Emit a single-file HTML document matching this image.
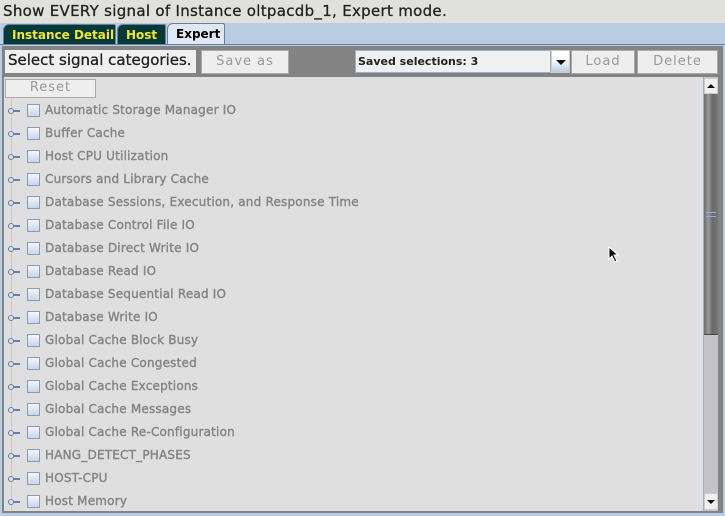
<!DOCTYPE html>
<html><head><style>
body{margin:0;width:725px;height:516px;background:#b8cce4;position:relative;overflow:hidden;font-family:"DejaVu Sans","Liberation Sans",sans-serif}
.a{position:absolute;box-sizing:border-box}
.title{left:0;top:0;width:725px;height:23px;background:#e1e1dc;font-size:15px;letter-spacing:0.3px;color:#222;padding:2px 0 0 3px;white-space:nowrap;-webkit-text-stroke:0.3px #222}
.tab{top:24px;height:20px;font-size:12px;font-weight:bold;padding:3px 0 0 8px;border:1px solid #6b7f99;border-bottom:none;border-radius:6px 2px 0 0}
.dk{background:#053a38;color:#f5e62a}
.btn{background:#eeeeee;border:1px solid #aaa;color:#999;font-size:13px;text-align:center;letter-spacing:1px}
.row{left:8px;height:23px;font-size:12px;letter-spacing:0.2px;color:#858585;white-space:nowrap;-webkit-text-stroke:0.4px #858585}
.row .k{position:absolute;left:0;top:10px;width:12px;height:2px;background:#6580b0}
.row .k:before{content:"";position:absolute;left:0;top:-2px;border:1px solid #6580b0;border-radius:50%;background:#dfdfdf;box-sizing:border-box;width:6px;height:6px}
.row .c{position:absolute;left:19px;top:4px;width:13px;height:13px;border:1px solid #8a9bb8;background:linear-gradient(#f4f6fb,#c9d6ea);box-sizing:border-box}
.row .t{position:absolute;left:37px;top:3px}
</style></head><body>
<div class="a title">Show EVERY signal of Instance oltpacdb_1, Expert mode.</div>
<div class="a tab dk" style="left:3px;width:113px">Instance Detail</div>
<div class="a tab dk" style="left:117px;width:49px">Host</div>
<div class="a tab" style="left:167px;width:58px;background:#dfe8f4;color:#000;top:23px;height:22px">Expert</div>
<div class="a" style="left:0;top:44px;width:725px;height:472px;background:#b8cce4;border-top:1px solid #6b7f99"></div>
<div class="a" style="left:2px;top:46px;width:721px;height:467px;background:#838383"></div>
<div class="a" style="left:5px;top:50px;width:191px;height:23px;background:#f0f0f0;font-size:15px;color:#222;padding:1px 0 0 3px;white-space:nowrap;-webkit-text-stroke:0.3px #222">Select signal categories.</div>
<div class="a btn" style="left:201px;top:50px;width:88px;height:24px;padding-top:3px">Save as</div>
<div class="a" style="left:355px;top:50px;width:196px;height:23px;background:#f0f0f0;border:1px solid #9fb0cc;font-size:11px;font-weight:bold;color:#222;padding:4px 0 0 2px">Saved selections: 3</div>
<div class="a" style="left:551px;top:50px;width:19px;height:23px;background:linear-gradient(#fff 40%,#b8cce4);border:1px solid #ccc"><div class="a" style="left:4px;top:9px;border-left:5px solid transparent;border-right:5px solid transparent;border-top:5px solid #111"></div></div>
<div class="a btn" style="left:571px;top:50px;width:64px;height:24px;padding-top:3px">Load</div>
<div class="a btn" style="left:637px;top:50px;width:81px;height:24px;padding-top:3px">Delete</div>
<div class="a" style="left:4px;top:77px;width:699px;height:434px;background:#dfdfdf"></div>
<div class="a btn" style="left:5px;top:79px;width:91px;height:19px;font-size:13px;padding-top:0">Reset</div>
<div class="a" style="left:11px;top:98px;width:1px;height:412px;background:#c8c8c8"></div>
<div class="a" style="left:703px;top:77px;width:15px;height:434px;background:#c4c4c8;border-left:1px solid #9fb0cc"></div>
<div class="a" style="left:704px;top:78px;width:14px;height:16px;background:#f0f0f0;border:1px solid #ccc"><div class="a" style="left:2px;top:5px;border-left:4px solid transparent;border-right:4px solid transparent;border-bottom:4px solid #111"></div></div>
<div class="a" style="left:704px;top:94px;width:14px;height:241px;background:linear-gradient(90deg,#6a6a6a,#999 30%,#6a6a6a 60%,#777);border-bottom:1px solid #444"></div>
<div class="a" style="left:706px;top:212px;width:10px;height:5px;border-top:1px solid #8fb0f0;border-bottom:1px solid #8fb0f0"></div>
<div class="a" style="left:704px;top:493px;width:14px;height:17px;background:#f0f0f0;border:1px solid #ccc"><div class="a" style="left:2px;top:6px;border-left:4px solid transparent;border-right:4px solid transparent;border-top:4px solid #111"></div></div>
<div class="a row" style="top:100px"><i class="k"></i><i class="c"></i><span class="t">Automatic Storage Manager IO</span></div>
<div class="a row" style="top:123px"><i class="k"></i><i class="c"></i><span class="t">Buffer Cache</span></div>
<div class="a row" style="top:146px"><i class="k"></i><i class="c"></i><span class="t">Host CPU Utilization</span></div>
<div class="a row" style="top:169px"><i class="k"></i><i class="c"></i><span class="t">Cursors and Library Cache</span></div>
<div class="a row" style="top:192px"><i class="k"></i><i class="c"></i><span class="t">Database Sessions, Execution, and Response Time</span></div>
<div class="a row" style="top:215px"><i class="k"></i><i class="c"></i><span class="t">Database Control File IO</span></div>
<div class="a row" style="top:238px"><i class="k"></i><i class="c"></i><span class="t">Database Direct Write IO</span></div>
<div class="a row" style="top:261px"><i class="k"></i><i class="c"></i><span class="t">Database Read IO</span></div>
<div class="a row" style="top:284px"><i class="k"></i><i class="c"></i><span class="t">Database Sequential Read IO</span></div>
<div class="a row" style="top:307px"><i class="k"></i><i class="c"></i><span class="t">Database Write IO</span></div>
<div class="a row" style="top:330px"><i class="k"></i><i class="c"></i><span class="t">Global Cache Block Busy</span></div>
<div class="a row" style="top:353px"><i class="k"></i><i class="c"></i><span class="t">Global Cache Congested</span></div>
<div class="a row" style="top:376px"><i class="k"></i><i class="c"></i><span class="t">Global Cache Exceptions</span></div>
<div class="a row" style="top:399px"><i class="k"></i><i class="c"></i><span class="t">Global Cache Messages</span></div>
<div class="a row" style="top:422px"><i class="k"></i><i class="c"></i><span class="t">Global Cache Re-Configuration</span></div>
<div class="a row" style="top:445px"><i class="k"></i><i class="c"></i><span class="t">HANG_DETECT_PHASES</span></div>
<div class="a row" style="top:468px"><i class="k"></i><i class="c"></i><span class="t">HOST-CPU</span></div>
<div class="a row" style="top:491px"><i class="k"></i><i class="c"></i><span class="t">Host Memory</span></div>
<div class="a" style="left:2px;top:511px;width:721px;height:2px;background:#838383"></div>
<svg class="a" style="left:608px;top:246px" width="12" height="18"><path d="M1 1 L1 13 L4 10 L7 16 L9 15 L6 9 L10 9 Z" fill="#000" stroke="#fff" stroke-width="1"/></svg>
</body></html>
